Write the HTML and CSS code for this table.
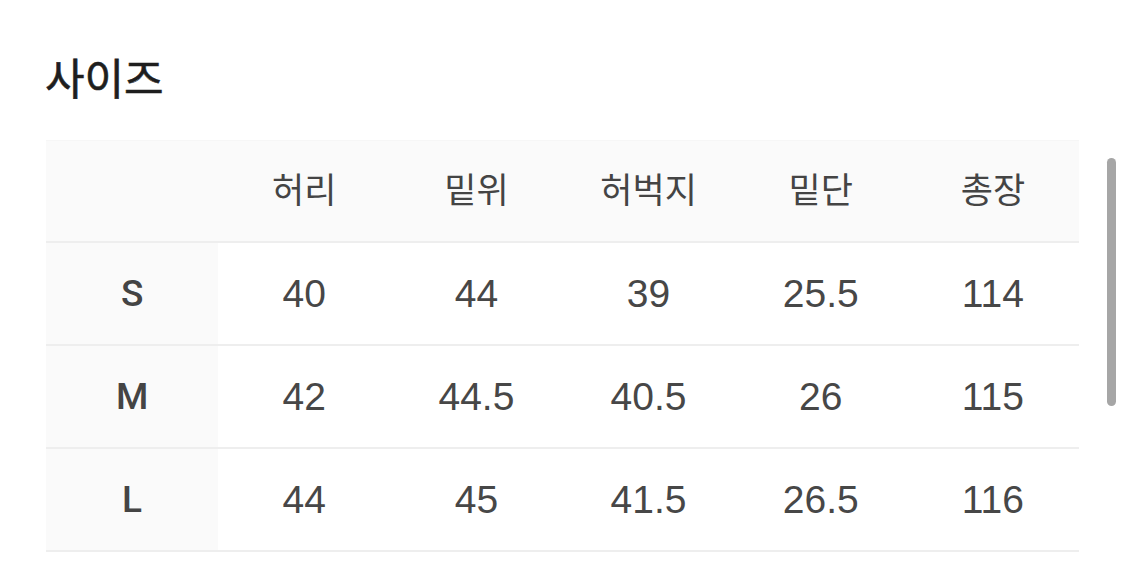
FILE: index.html
```html
<!DOCTYPE html>
<html lang="ko">
<head>
<meta charset="utf-8">
<link rel="stylesheet" href="styles.css">
</head>
<body>
<div class="page">
  <h2 class="title">사이즈</h2>
  <table class="size-table">
    <thead>
      <tr>
        <th class="corner"></th>
        <th>허리</th>
        <th>밑위</th>
        <th>허벅지</th>
        <th>밑단</th>
        <th>총장</th>
      </tr>
    </thead>
    <tbody>
      <tr><th class="label">S</th><td>40</td><td>44</td><td>39</td><td>25.5</td><td>114</td></tr>
      <tr><th class="label">M</th><td>42</td><td>44.5</td><td>40.5</td><td>26</td><td>115</td></tr>
      <tr><th class="label">L</th><td>44</td><td>45</td><td>41.5</td><td>26.5</td><td>116</td></tr>
    </tbody>
  </table>
  <div class="scrollbar"></div>
</div>
</body>
</html>
```
FILE: styles.css
```css
html, body {
  margin: 0;
  padding: 0;
  background: #ffffff;
}
.page {
  position: relative;
  width: 1125px;
  height: 570px;
  overflow: hidden;
  padding: 48px 0 0 45px;
  box-sizing: border-box;
  font-family: "Liberation Sans", "Noto Sans CJK KR", sans-serif;
}
.title {
  margin: 0;
  font-family: "Noto Sans CJK KR", sans-serif;
  font-weight: 400;
  font-size: 43px;
  line-height: 56px;
  color: #1e1e1e;
  -webkit-text-stroke: 0.6px #1e1e1e;
}
.size-table {
  margin-top: 36px;
  margin-left: 1px;
  width: 1033px;
  border-collapse: collapse;
  table-layout: fixed;
}
.size-table th,
.size-table td {
  height: 101px;
  padding: 0;
  text-align: center;
  vertical-align: middle;
  border-bottom: 2px solid #eeeeee;
}
.size-table thead th {
  background: #fafafa;
  font-family: "Noto Sans CJK KR", sans-serif;
  font-weight: 400;
  font-size: 35px;
  color: #444444;
  height: 92px;
  padding-bottom: 8px;
  border-top: 1px solid #f6f6f6;
}
.size-table td {
  font-size: 39px;
  color: #474747;
  font-weight: 400;
}
.size-table .label {
  background: #fafafa;
  font-family: "Roboto", "Liberation Sans", sans-serif;
  font-weight: 500;
  font-size: 37px;
  color: #444444;
}
.scrollbar {
  position: absolute;
  left: 1107px;
  top: 158px;
  width: 9px;
  height: 248px;
  border-radius: 5px;
  background: #a6a6a6;
}
```
